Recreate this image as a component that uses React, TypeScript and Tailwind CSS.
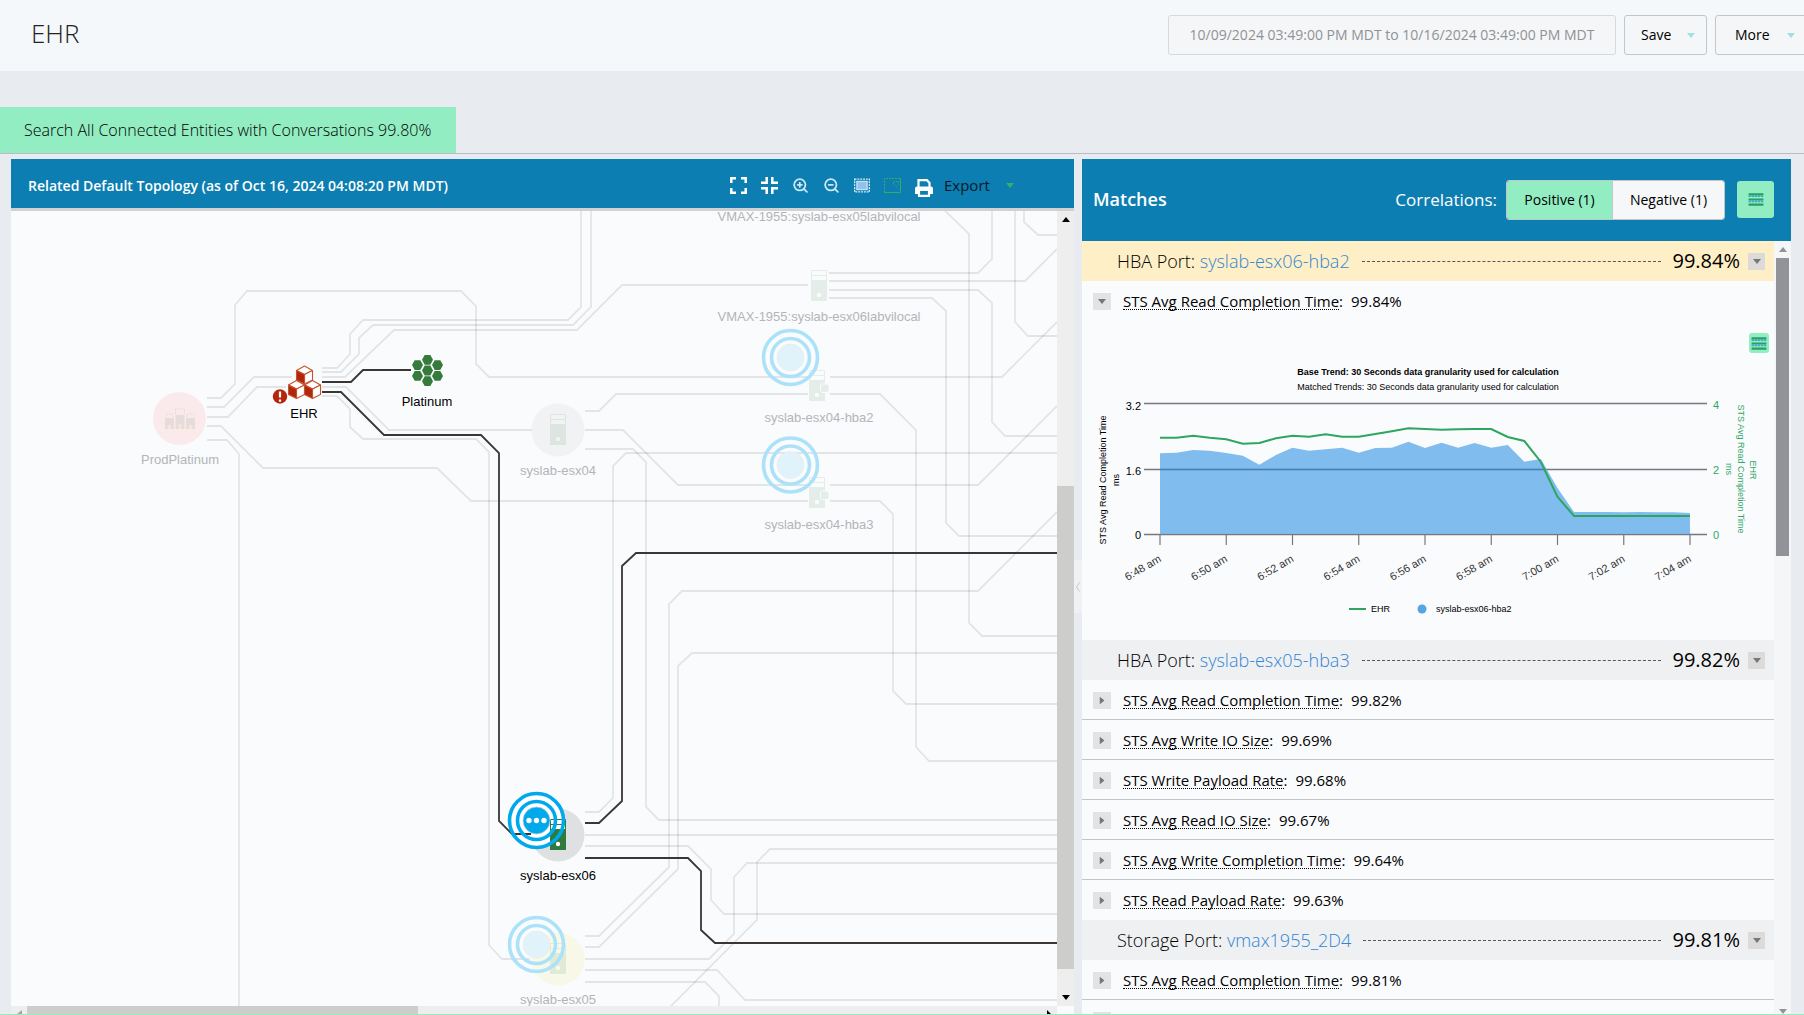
import { LuZoomIn, LuZoomOut } from "react-icons/lu";

type Point = [number, number];

type Link = {
  points: Point[];
  active?: boolean;
};

const links: Link[] = [
  { points: [[207, 398], [221, 398], [235, 384], [235, 305], [247, 291], [461, 291], [476, 306], [476, 364], [489, 377], [808, 377]] },
  { points: [[830, 377], [1002, 377], [1057, 322]] },
  { points: [[207, 407], [224, 407], [254, 377], [292, 377]] },
  { points: [[207, 417], [228, 417], [257, 387], [286, 387]] },
  { points: [[207, 426], [221, 426], [263, 468], [437, 468], [471, 501], [808, 501]] },
  { points: [[830, 501], [880, 501], [893, 514], [893, 691], [906, 704], [1057, 704]] },
  { points: [[207, 440], [227, 440], [239, 454], [239, 1010]] },
  { points: [[322, 368], [337, 368], [350, 354], [350, 334], [363, 320], [568, 320], [581, 307], [581, 200]] },
  { points: [[322, 372], [341, 372], [359, 354], [359, 338], [373, 325], [573, 325], [591, 307], [591, 200]] },
  { points: [[322, 377], [345, 377], [394, 330], [577, 330], [622, 285], [808, 285]] },
  { points: [[322, 387], [346, 387], [389, 430], [532, 430]] },
  { points: [[322, 396], [337, 396], [350, 409], [350, 427], [363, 439], [476, 439], [489, 452], [489, 945], [502, 959], [530, 959]] },
  { points: [[585, 411], [599, 411], [616, 394], [808, 394]] },
  { points: [[830, 394], [880, 394], [916, 430], [916, 747], [929, 761], [1057, 761]] },
  { points: [[585, 430], [623, 430], [678, 485], [808, 485]] },
  { points: [[830, 485], [978, 485], [1057, 406]] },
  { points: [[585, 449], [633, 449], [646, 462], [646, 807], [659, 820], [1057, 820]] },
  { points: [[585, 812], [599, 812], [613, 798], [613, 466], [626, 453], [1057, 453]] },
  { points: [[585, 835], [1057, 835]] },
  { points: [[585, 846], [688, 846], [711, 869], [711, 900], [724, 914], [1057, 914]] },
  { points: [[585, 936], [599, 936], [669, 867], [669, 604], [682, 591], [978, 591], [1057, 512]] },
  { points: [[585, 947], [599, 947], [678, 869], [678, 666], [692, 653], [1057, 653]] },
  { points: [[585, 959], [709, 959], [734, 934], [734, 877], [747, 863], [1057, 863]] },
  { points: [[585, 970], [717, 970], [745, 1000], [1057, 1000]] },
  { points: [[585, 982], [705, 982], [719, 996], [719, 1010]] },
  { points: [[667, 1010], [757, 920], [757, 862], [770, 849], [1057, 849]] },
  { points: [[934, 200], [969, 234], [969, 623], [982, 636], [1057, 636]] },
  { points: [[829, 273], [978, 273], [992, 259], [992, 200]] },
  { points: [[829, 281], [1025, 281], [1057, 249]] },
  { points: [[829, 290], [978, 290], [992, 303], [992, 422], [1005, 436], [1057, 436]] },
  { points: [[829, 298], [932, 298], [946, 311], [946, 523], [959, 536], [1057, 536]] },
  { points: [[1015, 200], [1015, 322], [1028, 336], [1057, 336]] },
  { points: [[1024, 200], [1024, 222], [1038, 235], [1057, 235]] },
  { points: [[322, 382], [351, 382], [363, 370], [411, 370]], active: true },
  { points: [[322, 392], [341, 392], [384, 435], [481, 435], [499, 453], [499, 821], [512, 834], [531, 834]], active: true },
  { points: [[585, 823], [599, 823], [622, 801], [622, 566], [636, 553], [1057, 553]], active: true },
  { points: [[585, 858], [688, 858], [701, 871], [701, 930], [715, 943], [1057, 943]], active: true },
];

type MetricData = {
  name: string;
  score: string;
};

type MatchData = {
  kind: string;
  entity: string;
  score: string;
  metrics: MetricData[];
};

const matches: MatchData[] = [
  {
    kind: "HBA Port:",
    entity: "syslab-esx06-hba2",
    score: "99.84%",
    metrics: [{ name: "STS Avg Read Completion Time", score: "99.84%" }],
  },
  {
    kind: "HBA Port:",
    entity: "syslab-esx05-hba3",
    score: "99.82%",
    metrics: [
      { name: "STS Avg Read Completion Time", score: "99.82%" },
      { name: "STS Avg Write IO Size", score: "99.69%" },
      { name: "STS Write Payload Rate", score: "99.68%" },
      { name: "STS Avg Read IO Size", score: "99.67%" },
      { name: "STS Avg Write Completion Time", score: "99.64%" },
      { name: "STS Read Payload Rate", score: "99.63%" },
    ],
  },
  {
    kind: "Storage Port:",
    entity: "vmax1955_2D4",
    score: "99.81%",
    metrics: [
      { name: "STS Avg Read Completion Time", score: "99.81%" },
      { name: "STS Avg Write IO Size", score: "99.70%" },
    ],
  },
];

// y positions inside the chart, one every 30 seconds
const ehrTrend = [
  116.7, 116.7, 114.7, 116.7, 118.3, 122.7, 122, 117.3, 114.7, 115.7, 113.3, 115.7, 115.7, 113, 110.3, 107.3, 108,
  108.7, 108.3, 108, 108, 116, 120, 141, 175.7, 195, 195, 195, 195, 195, 195, 195, 195,
];
const hbaTrend = [
  132.3, 131.7, 129, 129.7, 132, 134.7, 143.7, 134, 126.7, 129.7, 128.3, 126.7, 131.7, 127, 126.7, 120.7, 127, 121.7,
  126.7, 122, 126.7, 124, 140.7, 138, 167, 191, 191, 191, 191.3, 191, 191.3, 191.3, 192,
];
const times = ["6:48 am", "6:50 am", "6:52 am", "6:54 am", "6:56 am", "6:58 am", "7:00 am", "7:02 am", "7:04 am"];

const toPoints = (values: number[]) => values.map((y, i) => `${78 + i * 16.56},${y}`).join(" ");

function Caret({ className = "" }: { className?: string }) {
  return (
    <svg className={`shrink-0 ${className}`} width="8" height="5" viewBox="0 0 8 5" aria-hidden="true">
      <path d="M0 0h8L4 5z" fill="currentColor" />
    </svg>
  );
}

function MenuIcon({ className = "" }: { className?: string }) {
  return (
    <svg className={className} viewBox="0 0 16 14" aria-hidden="true">
      <path d="M0 1.5h16M0 7h16M0 12.5h16" stroke="#27a060" strokeWidth="2.4" />
      <path d="M0 3.6h16M0 9.2h16" stroke="#3f9fd8" strokeWidth="1.6" strokeDasharray="2.5 .8" />
    </svg>
  );
}

function Header() {
  return (
    <header className="flex h-[71px] shrink-0 items-start justify-between overflow-hidden bg-[#f4f8fb] pt-[15px] pl-[31px]">
      <h1 className="text-[26px] leading-9 font-light text-[#222]">EHR</h1>
      <div className="-mr-4 flex shrink-0 gap-2">
        <button className="h-10 w-[448px] rounded-[3px] border border-[#d5dadd] bg-[#f4f6f8] text-sm whitespace-nowrap text-[#8f9295]">
          10/09/2024 03:49:00 PM MDT to 10/16/2024 03:49:00 PM MDT
        </button>
        <button className="flex h-10 w-[83px] items-center justify-between rounded-[3px] border border-[#c3c7ca] bg-[#f4f6f8] pr-[11px] pl-4 text-sm text-black">
          Save
          <Caret className="text-[#a4dde2]" />
        </button>
        <button className="flex h-10 w-[105px] items-center justify-between rounded-[3px] border border-[#c3c7ca] bg-[#f4f6f8] pr-6 pl-[19px] text-sm text-black">
          More
          <Caret className="text-[#a4dde2]" />
        </button>
      </div>
    </header>
  );
}

function Toolbar() {
  return (
    <div className="flex items-center gap-[14px]">
      <button aria-label="Expand" className="text-white">
        <svg width="17" height="17" viewBox="0 0 17 17" fill="none" stroke="currentColor" strokeWidth="2.5">
          <path d="M1.3 6V1.3H6M11 1.3h4.7V6M15.7 11v4.7H11M6 15.7H1.3V11" />
        </svg>
      </button>
      <button aria-label="Collapse" className="text-white">
        <svg width="17" height="17" viewBox="0 0 17 17" fill="none" stroke="currentColor" strokeWidth="2.5">
          <path d="M0 5.7h5.7V0M11.3 0v5.7H17M17 11.3h-5.7V17M5.7 17v-5.7H0" />
        </svg>
      </button>
      <button aria-label="Zoom in" className="text-[#cfe8f8]">
        <LuZoomIn size={17} strokeWidth={2.5} />
      </button>
      <button aria-label="Zoom out" className="text-[#cfe8f8]">
        <LuZoomOut size={17} strokeWidth={2.5} />
      </button>
      <button aria-label="Fit to window">
        <svg width="16" height="15" viewBox="0 0 17 15" fill="none">
          <rect x=".7" y=".7" width="15.6" height="13.6" stroke="#d9ecf8" strokeWidth="1.4" strokeDasharray="2 1" />
          <rect x="3" y="3" width="11" height="9" fill="#8fc3ec" stroke="#e6f3fb" />
        </svg>
      </button>
      <button aria-label="Overview">
        <svg width="17" height="15" viewBox="0 0 17 15" fill="none" stroke="#2fae66">
          <path d="M0 14.500h16.500V.500" />
          <path d="M.5 14V.500H16" strokeDasharray="2 1" />
          <path d="M9.500 3.500h5v3l-2 2-3-2z" strokeDasharray="1.500 1" />
        </svg>
      </button>
      <button aria-label="Print" className="mt-1 text-white">
        <svg width="18" height="18" viewBox="0 0 18 18" fill="none">
          <path d="M3.500 8V1.200h8.500L14.500 4v4" stroke="currentColor" strokeWidth="2.200" />
          <path d="M2 7.500h14a2 2 0 0 1 2 2V15h-3v-3H3v3H0V9.500a2 2 0 0 1 2-2z" fill="currentColor" />
          <path d="M4 12v4.900h10V12" stroke="currentColor" strokeWidth="2.200" />
        </svg>
      </button>
      <button className="-ml-[3px] flex items-center gap-4 text-[15px] text-[#0a1a2a]">
        Export
        <Caret className="text-[#35b06a]" />
      </button>
    </div>
  );
}

type ServerProps = {
  x: number;
  y: number;
  badge?: boolean;
  faded?: boolean;
};

function Server({ x, y, badge, faded }: ServerProps) {
  return (
    <g transform={`translate(${x} ${y})`} opacity={faded ? 0.1 : 1}>
      <path d="M.5.5h15v30H.5z" fill="#fff" stroke="#2f7a3d" />
      <path d="M0 5.500h16" stroke="#2f7a3d" />
      <path d="M0 10h16v21H0z" fill="#2f7a3d" />
      <circle cx="8" cy="25" r="2.200" fill="#fff" />
      {badge && <rect x="11.500" y="14" width="8.500" height="8.500" rx="2" fill="#2f7a3d" stroke="#fff" />}
    </g>
  );
}

type TargetProps = {
  x: number;
  y: number;
  active?: boolean;
};

function Target({ x, y, active }: TargetProps) {
  return (
    <g transform={`translate(${x} ${y})`}>
      <circle r="27" fill="none" stroke={active ? "#00a8ec" : "#ace2f9"} strokeWidth="3.600" />
      <circle r="19" fill="none" stroke={active ? "#00a8ec" : "#ace2f9"} strokeWidth="3.600" />
      <circle r="13.500" fill={active ? "#00a8ec" : "#e0f2fa"} stroke={active ? "#b9cdd8" : "#e8ecea"} strokeWidth=".8" />
      {active && (
        <g fill="#fff">
          <circle cx="-7.500" r="2.700" />
          <circle r="2.700" />
          <circle cx="7.500" r="2.700" />
        </g>
      )}
    </g>
  );
}

function Cube({ x, y }: { x: number; y: number }) {
  return (
    <g transform={`translate(${x} ${y})`} stroke="#c4542f" strokeWidth="1.100" strokeLinejoin="round">
      <path d="M0 4.500L8 0l8 4.500L8 8.500z" fill="#fff" />
      <path d="M16 4.500L8 8.500V18l8-4z" fill="#fff" />
      <path d="M0 4.500l8 4V18l-8-4z" fill="#b3260d" />
    </g>
  );
}

function Hexagons() {
  const cells: Point[] = [[0, 0], [0, -10.700], [0, 10.700], [-10, -5.400], [10, -5.400], [-10, 5.400], [10, 5.400]];
  return (
    <g fill="#357b3c">
      {cells.map(([x, y]) => (
        <path key={`${x},${y}`} transform={`translate(${427.500 + x} ${370.500 + y})`} d="M-5.500 0l2.700-4.900h5.600L5.500 0 2.800 4.900h-5.600z" />
      ))}
    </g>
  );
}

function NodeLabel({ x, y, text, active }: { x: number; y: number; text: string; active?: boolean }) {
  return (
    <text x={x} y={y} textAnchor="middle" fontSize="13" fill={active ? "#000" : "#b3b5b7"}>
      {text}
    </text>
  );
}

function TopologyMap() {
  return (
    <svg
      className="block size-full font-['Liberation_Sans',sans-serif]"
      viewBox="11 211 1046 795"
      preserveAspectRatio="xMinYMin slice"
      role="img"
      aria-label="Related topology"
    >
      {/* Node halos sit under the links */}
      <circle cx="179.500" cy="418.500" r="26.500" fill="#fbeaec" />
      <circle cx="558" cy="430" r="26.500" fill="#f1f2f4" />
      <circle cx="558" cy="835" r="26.500" fill="#dfe0e2" />
      <circle cx="558" cy="959" r="26.500" fill="#f7f8e8" />
      <circle cx="536.500" cy="820.500" r="27" fill="#fff" />

      {links.map((link, i) => (
        <polyline
          key={i}
          points={link.points.map((p) => p.join(",")).join(" ")}
          fill="none"
          stroke={link.active ? "#3a3633" : "#000"}
          strokeOpacity={link.active ? 1 : 0.09}
          strokeWidth="1.800"
        />
      ))}

      {/* ProdPlatinum */}
      <g opacity=".1" fill="#3c6e58">
        <path d="M165 418h9v11h-9zM175.500 415h9v14h-9zM186 418h9v11h-9z" />
        <g fill="none" stroke="#3c6e58" strokeDasharray="2 1">
          <path d="M166 417v-3h7v3M175.500 414v-5h9v5M187 417v-3h7v3" />
        </g>
        <path d="M168 425h3v4h-3zM178.500 424h3v5h-3zM189 425h3v4h-3z" fill="#e8c800" />
      </g>
      <NodeLabel x={180} y={464} text="ProdPlatinum" />

      {/* EHR */}
      <Cube x={296.500} y={366} />
      <Cube x={288.500} y={380.500} />
      <Cube x={304.500} y={380.500} />
      <circle cx="280" cy="396.500" r="7.200" fill="#b3260d" />
      <path d="M280 391.500v6M280 399.500v2.300" stroke="#fff" strokeWidth="2.200" />
      <NodeLabel x={304} y={418} text="EHR" active />

      <Hexagons />
      <NodeLabel x={427} y={406} text="Platinum" active />

      <Server x={550} y={414} faded />
      <NodeLabel x={558} y={475} text="syslab-esx04" />

      <NodeLabel x={819} y={221} text="VMAX-1955:syslab-esx05labvilocal" />
      <Server x={811} y={270} faded />
      <NodeLabel x={819} y={321} text="VMAX-1955:syslab-esx06labvilocal" />

      <Server x={809} y={370} badge faded />
      <Target x={790.500} y={357.500} />
      <NodeLabel x={819} y={422} text="syslab-esx04-hba2" />

      <Server x={809} y={477} badge faded />
      <Target x={790.500} y={465} />
      <NodeLabel x={819} y={529} text="syslab-esx04-hba3" />

      <Server x={550} y={819} />
      <Target x={536.500} y={820.500} active />
      <NodeLabel x={558} y={880} text="syslab-esx06" active />

      <Server x={550} y={943} faded />
      <Target x={536.500} y={944.500} />
      <NodeLabel x={558} y={1004} text="syslab-esx05" />
    </svg>
  );
}

function TopologyPanel() {
  return (
    <section className="flex min-w-0 flex-[1063_1_0%] flex-col bg-[#fafbfd]">
      <div className="flex h-[52px] shrink-0 items-center border-b-[3px] border-[#cfd1d3] bg-[#0c7eb1] pt-1">
        <h2 className="w-[719px] shrink-0 pl-[17px] text-sm font-semibold whitespace-nowrap text-white">
          Related Default Topology (as of Oct 16, 2024 04:08:20 PM MDT)
        </h2>
        <Toolbar />
      </div>
      <div className="flex min-h-0 flex-1">
        <div className="min-w-0 flex-1 overflow-hidden">
          <TopologyMap />
        </div>
        <div className="flex w-[17px] shrink-0 flex-col items-center bg-[#eee]">
          <Caret className="mt-[6px] rotate-180 text-black" />
          <div className="mt-[264px] w-full flex-1 bg-[#cdcdcb]" />
          <div className="flex h-[37px] w-full shrink-0 items-end justify-center pb-[6px]">
            <Caret className="text-black" />
          </div>
        </div>
      </div>
      <div className="flex h-2 shrink-0 overflow-hidden bg-[#eee]">
        <div className="flex w-4 shrink-0 items-end justify-end pr-[5px]">
          <svg width="5" height="4" viewBox="0 0 5 4" aria-hidden="true">
            <path d="M5 0v4H0z" fill="#a3a3a3" />
          </svg>
        </div>
        <div className="w-[391px] bg-[#cdcdcb]" />
        <div className="flex flex-1 items-end justify-end pr-[6px]">
          <svg width="4" height="4" viewBox="0 0 4 4" aria-hidden="true">
            <path d="M0 0v4h4z" fill="#000" />
          </svg>
        </div>
        <div className="w-[17px] bg-[#fafbfd]" />
      </div>
    </section>
  );
}

function TrendChart() {
  return (
    <div className="relative">
      <svg
        className="block h-[319px] w-full font-['Liberation_Sans',sans-serif]"
        viewBox="0 0 692 319"
        role="img"
        aria-label="STS Avg Read Completion Time trend"
      >
        <g fontSize="9" textAnchor="middle">
          <text x="346" y="54" fontWeight="bold">Base Trend: 30 Seconds data granularity used for calculation</text>
          <text x="346" y="69">Matched Trends: 30 Seconds data granularity used for calculation</text>
          <text transform="translate(24 159) rotate(-90)">STS Avg Read Completion Time</text>
          <text transform="translate(37 159) rotate(-90)">ms</text>
          <g fill="#2fa765">
            <text transform="translate(668 149) rotate(90)">EHR</text>
            <text transform="translate(656 148) rotate(90)">STS Avg Read Completion Time</text>
            <text transform="translate(644 148) rotate(90)">ms</text>
          </g>
        </g>

        <g stroke="#77787f" strokeWidth="1.500">
          <path d="M62 82.500h563M62 148.500h563M62 213.500h563" />
          {times.map((time, i) => (
            <path key={time} d={`M${78 + i * 66.25} 214v10`} strokeWidth="1.200" />
          ))}
        </g>
        <polygon points={`78,213 ${toPoints(hbaTrend)} 608,213`} fill="#6bb0ec" fillOpacity=".85" />
        <path d="M78 148.500h386" stroke="#4a7fb5" strokeWidth="1.500" />
        <polyline points={toPoints(ehrTrend)} fill="none" stroke="#2fa65f" strokeWidth="2" />

        <g fontSize="11">
          <text x="59" y="89" textAnchor="end">3.2</text>
          <text x="59" y="154" textAnchor="end">1.6</text>
          <text x="59" y="218" textAnchor="end">0</text>
          <g fill="#2fa765">
            <text x="631" y="88">4</text>
            <text x="631" y="153">2</text>
            <text x="631" y="218">0</text>
          </g>
          {times.map((time, i) => (
            <text key={time} transform={`translate(${80 + i * 66.25} 240) rotate(-30)`} textAnchor="end" fill="#333">
              {time}
            </text>
          ))}
        </g>

        <path d="M267 288h17" stroke="#2fa65f" strokeWidth="2" />
        <circle cx="340" cy="288" r="4.500" fill="#55a5e2" />
        <g fontSize="9">
          <text x="289" y="291">EHR</text>
          <text x="354" y="291">syslab-esx06-hba2</text>
        </g>
      </svg>
      <button aria-label="Chart menu" className="absolute top-3 right-[5px] flex size-5 items-center justify-center rounded-[3px] bg-[#92edc2]">
        <MenuIcon className="h-[13px] w-4" />
      </button>
    </div>
  );
}

function MetricRow({ metric, open, last }: { metric: MetricData; open?: boolean; last?: boolean }) {
  return (
    <div className={`flex h-10 items-center border-b pt-[2px] pl-[11px] text-[15px] text-black ${open || last ? "border-transparent" : "border-[#c3c6c8]"}`}>
      <button
        aria-label={`Toggle ${metric.name}`}
        aria-expanded={!!open}
        className="flex h-[17px] w-[18px] items-center justify-center bg-[#e3e3e4] text-[#77777a]"
      >
        <Caret className={open ? "" : "-rotate-90"} />
      </button>
      <span className="ml-3 border-b border-dotted border-black leading-4">{metric.name}</span>
      <span>:</span>
      <span className="ml-2">{metric.score}</span>
    </div>
  );
}

function MatchGroup({ match, selected }: { match: MatchData; selected?: boolean }) {
  return (
    <li>
      <div className={`flex h-10 items-center pr-[9px] pl-[35px] ${selected ? "bg-[#ffefc6]" : "bg-[#eff0f2]"}`}>
        <h3 className="text-[18px] font-light whitespace-nowrap text-black">
          {match.kind}{" "}
          <a href="#" className="text-[#2f86d4]">
            {match.entity}
          </a>
        </h3>
        <div className="mr-[11px] ml-3 flex-1 border-t border-dashed border-[#55575a]" />
        <span className="text-[20px] font-medium text-black">{match.score}</span>
        <button aria-label={`Options for ${match.entity}`} className="ml-2 flex h-[17px] w-[17px] items-center justify-center bg-[#dcdbda] text-[#77777a]">
          <Caret />
        </button>
      </div>
      {match.metrics.map((metric, i) => (
        <div key={metric.name}>
          <MetricRow metric={metric} open={selected} last={i === match.metrics.length - 1} />
          {selected && <TrendChart />}
        </div>
      ))}
    </li>
  );
}

function MatchesPanel() {
  return (
    <section className="flex min-w-0 flex-[709_1_0%] flex-col bg-[#fafbfd]">
      <div className="flex h-[82px] shrink-0 items-center bg-[#0c7eb1] pr-[17px] pb-px pl-[11px] text-white">
        <h2 className="flex-1 text-[18px] font-semibold">Matches</h2>
        <span className="mr-[9px] text-[17px]">Correlations:</span>
        <div className="flex h-10 overflow-hidden rounded-[3px] border border-[#c3c7ca] text-sm text-black">
          <button className="w-[105px] bg-[#92edc2]">Positive (1)</button>
          <button className="w-[112px] border-l border-[#c3c7ca] bg-[#f6f7f8]">Negative (1)</button>
        </div>
        <button aria-label="Matches menu" className="ml-3 flex size-[37px] items-center justify-center rounded-[3px] bg-[#92edc2]">
          <MenuIcon className="h-[13px] w-4" />
        </button>
      </div>
      <div className="flex min-h-0 flex-1">
        <ul className="min-w-0 flex-1 overflow-hidden">
          {matches.map((match, i) => (
            <MatchGroup key={match.entity} match={match} selected={i === 0} />
          ))}
        </ul>
        <div className="flex w-[17px] shrink-0 flex-col items-center bg-[#f5f6f8]">
          <Caret className="mt-[6px] rotate-180 text-[#919398]" />
          <div className="mt-[6px] w-[13px] flex-[298_1_0%] bg-[#919398]" />
          <div className="flex flex-[458_1_0%] items-end">
            <Caret className="text-[#919398]" />
          </div>
        </div>
      </div>
    </section>
  );
}

export default function App() {
  return (
    <div className="flex h-screen flex-col overflow-hidden border-b border-[#92edc2] bg-[#e8ebef] font-['Open_Sans',sans-serif]">
      <Header />
      <nav className="flex h-[83px] shrink-0 items-end border-b border-[#b9bdc1]">
        <a href="#" className="flex h-[46px] w-[456px] items-center bg-[#92edc2] pb-px pl-6 text-base font-light whitespace-nowrap text-black">
          Search All Connected Entities with Conversations 99.80%
        </a>
      </nav>
      <main className="flex min-h-0 flex-1 pt-[5px] pr-[13px] pl-[11px]">
        <TopologyPanel />
        <div className="flex w-2 shrink-0 items-center justify-center">
          <button aria-label="Resize panels" className="flex h-[53px] w-2 items-center justify-center bg-[#f0f1f3]">
            <svg width="4" height="10" viewBox="0 0 4 10" fill="none" stroke="#c5c8cc">
              <path d="M3.500.5l-3 4.500 3 4.500" />
            </svg>
          </button>
        </div>
        <MatchesPanel />
      </main>
    </div>
  );
}
